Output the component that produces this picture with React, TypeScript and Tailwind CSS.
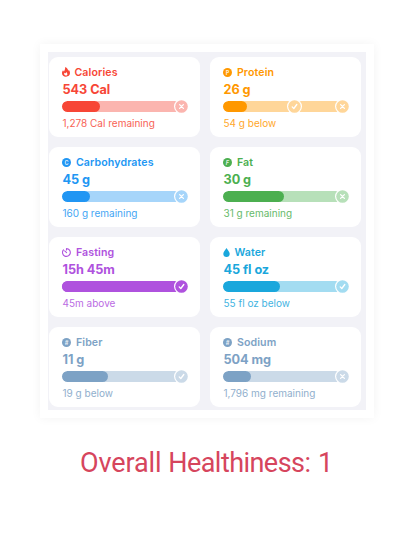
import type { ReactNode } from 'react';

type Mark = { kind: 'x' | 'check'; left: number };
type Metric = {
  name: string;
  value: string;
  note: string;
  color: string;
  track: string;
  fill: number;
  marks: Mark[];
  icon: ReactNode;
};

function Flame() {
  return (
    <svg className="mr-[4px]" width="8" height="10" viewBox="0 0 8 10" fill="currentColor">
      <path fillRule="evenodd" d="M3.2 0C5.3 1 6.1 2.500 6.1 3.900 6.500 3.600 6.600 3.200 6.600 2.800 7.600 3.800 8 5 8 6.100 8 8.400 6.300 9.700 4 9.700S0 8.200 0 6.200C0 5 .5 4 1.100 3.300 1.200 3.900 1.500 4.300 2 4.500 2.700 3.300 3.300 1.800 3.200 0ZM4.100 4.900C4.100 5.800 3.500 6.300 2.900 6.200 2.600 6 2.500 5.800 2.400 5.500 1.600 7 2.400 8.500 4 8.500 5.600 8.500 6 6.500 4.100 4.900Z" />
    </svg>
  );
}

function Coin({ children, slanted = false }: { children: string; slanted?: boolean }) {
  return (
    <svg className="mr-[4.5px]" width="9" height="9" viewBox="0 0 9 9">
      <circle cx="4.500" cy="4.500" r="4.500" fill="currentColor" />
      <text x="4.500" y="6.500" textAnchor="middle" fill="#fff" fillOpacity=".85" fontSize="5.500" fontWeight="700" fontStyle={slanted ? 'italic' : 'normal'}>
        {children}
      </text>
    </svg>
  );
}

function Timer() {
  return (
    <svg className="mr-[4.5px]" width="9" height="9" viewBox="0 0 9 9" fill="none" stroke="currentColor" strokeWidth="1.100" strokeLinecap="round" strokeLinejoin="round">
      <path d="M4.500 2V.6A3.900 3.900 0 1 1 1.500 1.900M2.700 2.900 4.600 4.700" />
    </svg>
  );
}

function Drop() {
  return (
    <svg className="mr-[4px]" width="7" height="9" viewBox="0 0 7 9" fill="currentColor">
      <path d="M3.500 0C4.300 1.700 6.700 3.900 6.700 5.700A3.200 3.200 0 0 1 .3 5.700C.3 3.900 2.700 1.700 3.500 0Z" />
    </svg>
  );
}

const metrics: Metric[] = [
  { name: 'Calories', value: '543 Cal', note: '1,278 Cal remaining', color: '#f74636', track: '#fbb5af', fill: 37.5, marks: [{ kind: 'x', left: 112 }], icon: <Flame /> },
  { name: 'Protein', value: '26 g', note: '54 g below', color: '#ff9800', track: '#ffd699', fill: 23.5, marks: [{ kind: 'check', left: 64 }, { kind: 'x', left: 112 }], icon: <Coin>P</Coin> },
  { name: 'Carbohydrates', value: '45 g', note: '160 g remaining', color: '#2196f3', track: '#a6d5fa', fill: 27.5, marks: [{ kind: 'x', left: 112 }], icon: <Coin>C</Coin> },
  { name: 'Fat', value: '30 g', note: '31 g remaining', color: '#4caf50', track: '#b7e0b9', fill: 61, marks: [{ kind: 'x', left: 112 }], icon: <Coin slanted>F</Coin> },
  { name: 'Fasting', value: '15h 45m', note: '45m above', color: '#af52de', track: '#af52de', fill: 118, marks: [{ kind: 'check', left: 112 }], icon: <Timer /> },
  { name: 'Water', value: '45 fl oz', note: '55 fl oz below', color: '#1aa7dc', track: '#a3dcf1', fill: 57, marks: [{ kind: 'check', left: 112 }], icon: <Drop /> },
  { name: 'Fiber', value: '11 g', note: '19 g below', color: '#7da2c5', track: '#cbdae8', fill: 46, marks: [{ kind: 'check', left: 112 }], icon: <Coin slanted>#</Coin> },
  { name: 'Sodium', value: '504 mg', note: '1,796 mg remaining', color: '#7da2c5', track: '#cbdae8', fill: 28, marks: [{ kind: 'x', left: 112 }], icon: <Coin slanted>#</Coin> },
];

function Progress({ m }: { m: Metric }) {
  return (
    <div className="relative -ml-[0.5px] mt-[4px] h-[11px] w-[125px]">
      <div className="h-[11px] w-[119px] overflow-hidden rounded-l-full" style={{ background: m.track }}>
        <div className="h-full rounded-full" style={{ width: m.fill, background: m.color }} />
      </div>
      {m.marks.map((k) => (
        <span key={k.left} className="absolute -top-[2px] flex size-[15px] items-center justify-center rounded-full bg-white" style={{ left: k.left }}>
          <svg width="13" height="13" viewBox="0 0 13 13" fill="none" stroke="#fff" strokeWidth="1.300" strokeLinecap="round" strokeLinejoin="round">
            <circle cx="6.500" cy="6.500" r="6.300" fill={m.track} stroke="none" />
            <path d={k.kind === 'x' ? 'M4.600 4.600 8.400 8.400M8.400 4.600 4.600 8.400' : 'M4.200 6.900 5.800 8.500 8.800 4.500'} />
          </svg>
        </span>
      ))}
    </div>
  );
}

function Card({ m }: { m: Metric }) {
  return (
    <section className="h-20 w-[151px] rounded-[9px] bg-white pl-[13.5px] pt-[8px]" style={{ color: m.color }}>
      <div className="-ml-[0.5px] flex h-[14px] items-center text-[10.6px] font-semibold leading-[14px] tracking-[0.12px]">
        {m.icon}
        <span className="pl-[0.4px] pt-px">{m.name}</span>
      </div>
      <div className="mt-[1px] h-[17px] text-[12.7px] font-bold leading-[19px] tracking-[-0.05px]">{m.value}</div>
      <Progress m={m} />
      <div className="mt-[4px] text-[10px] leading-[14px] opacity-85">{m.note}</div>
    </section>
  );
}

export default function App() {
  return (
    <main className="flex h-[560px] w-[415px] flex-col bg-white pl-10 pt-11 font-['Inter',sans-serif]">
      <div className="h-[374px] w-[334px] bg-white p-2 shadow-[0_0_10px_rgba(0,0,0,0.05)]">
        <div className="grid h-[358px] grid-cols-[151px_151px] content-start gap-[10px] bg-[#f2f2f7] pl-px pt-[5px]">
          {metrics.map((m) => <Card key={m.name} m={m} />)}
        </div>
      </div>
      <h1 className="ml-[40px] mt-[28px] whitespace-nowrap font-['Roboto',sans-serif] text-[27px] font-normal leading-[34px] text-[#d6455d]">
        <span className="tracking-[-0.1px]">Overall</span>{' '}
        <span className="tracking-[-0.55px]">Healthiness:</span>{' '}
        <span className="pl-px">1</span>
      </h1>
    </main>
  );
}
